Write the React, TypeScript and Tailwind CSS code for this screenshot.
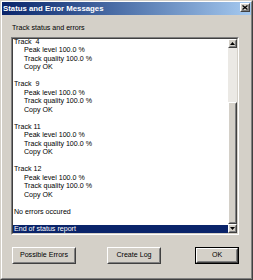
import React from "react";

const groups = [
  { t: "Track  4" },
  { t: "Track  9" },
  { t: "Track 11" },
  { t: "Track 12" },
];

function Raised({ className = "", children }: { className?: string; children?: React.ReactNode }) {
  return (
    <div className={`border border-t-white border-l-white border-r-[#404040] border-b-[#404040] bg-[#d4d0c8] ${className}`}>
      <div className="w-full h-full border border-t-[#d4d0c8] border-l-[#d4d0c8] border-r-[#808080] border-b-[#808080] flex items-center justify-center">
        {children}
      </div>
    </div>
  );
}

function Line({ children, indent = false }: { children?: React.ReactNode; indent?: boolean }) {
  return (
    <div className={`h-[8.5px] leading-[8.5px] whitespace-pre ${indent ? "pl-[11px]" : "pl-[1px]"}`}>{children}</div>
  );
}

export default function App() {
  return (
    <div className="w-[253px] h-[280px] bg-[#d4d0c8] border border-t-[#d4d0c8] border-l-[#d4d0c8] border-r-[#404040] border-b-[#404040] font-['Liberation_Sans',Arial,sans-serif] text-black overflow-hidden">
      <div className="h-full border border-t-white border-l-white border-r-[#808080] border-b-[#808080] flex flex-col">
        {/* Title bar */}
        <div className="h-[13px] flex items-start bg-gradient-to-r from-[#0a246a] to-[#a6caf0]">
          <div className="flex-1 pl-[1px] text-white font-bold text-[7.8px] leading-[13px] whitespace-nowrap">
            Status and Error Messages
          </div>
          <Raised className="w-[10px] h-[9px] mt-[1px] mr-[1px]">
            <svg width="6" height="5" viewBox="0 0 6 5" className="block">
              <path d="M0.5 0.5 L5.5 4.5 M5.5 0.5 L0.5 4.5" stroke="black" strokeWidth="1.3" fill="none" />
            </svg>
          </Raised>
        </div>

        {/* Body */}
        <div className="flex-1 flex flex-col pl-[9px]">
          <div className="mt-[9px] pl-[1px] h-[9px] leading-[9px] text-[7.1px] whitespace-nowrap">Track status and errors</div>

          {/* List box */}
          <div className="mt-[4px] w-[228px] h-[198px] border border-t-[#808080] border-l-[#808080] border-r-white border-b-white">
            <div className="w-full h-full border border-t-[#404040] border-l-[#404040] border-r-[#d4d0c8] border-b-[#d4d0c8] flex bg-white">
              <div className="flex-1 overflow-hidden text-[7.1px]">
                <div className="-mt-[1.5px]">
                  {groups.map((g) => (
                    <div key={g.t}>
                      <Line>{g.t}</Line>
                      <Line indent>Peak level 100.0 %</Line>
                      <Line indent>Track quality 100.0 %</Line>
                      <Line indent>Copy OK</Line>
                      <Line> </Line>
                    </div>
                  ))}
                  <Line>No errors occured</Line>
                  <Line> </Line>
                  <div className="h-[8.5px] leading-[8.5px] pl-[1px] bg-[#0a246a] text-white whitespace-pre">End of status report</div>
                </div>
              </div>
              {/* Scrollbar */}
              <div className="w-[9px] flex flex-col">
                <Raised className="w-[9px] h-[9px]">
                  <svg width="5" height="3" viewBox="0 0 5 3" className="block">
                    <path d="M2.5 0 L5 3 L0 3 Z" fill="black" />
                  </svg>
                </Raised>
                <div className="h-[54px] bg-[#ebe9e5]" />
                <Raised className="w-[9px] flex-1" />
                <Raised className="w-[9px] h-[9px]">
                  <svg width="5" height="3" viewBox="0 0 5 3" className="block">
                    <path d="M0 0 L5 0 L2.5 3 Z" fill="black" />
                  </svg>
                </Raised>
              </div>
            </div>
          </div>

          {/* Buttons */}
          <div className="mt-[12px] flex items-start text-[7.1px]">
            <Raised className="ml-[1px] w-[64px] h-[17px]">
              <span className="leading-none whitespace-nowrap">Possible Errors</span>
            </Raised>
            <Raised className="ml-[31px] w-[54px] h-[17px]">
              <span className="leading-none whitespace-nowrap">Create Log</span>
            </Raised>
            <div className="ml-[34px] w-[44px] h-[17px] border border-black">
              <Raised className="w-full h-full">
                <span className="leading-none whitespace-nowrap">OK</span>
              </Raised>
            </div>
          </div>
        </div>
      </div>
    </div>
  );
}
